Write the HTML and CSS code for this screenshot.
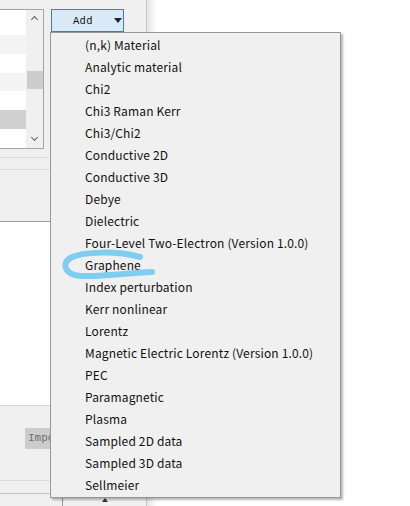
FILE: index.html
```html
<!DOCTYPE html>
<html>
<head>
<meta charset="utf-8">
<link rel="stylesheet" href="styles.css">
</head>
<body>
<div class="screen">
  <div class="panel">
    <div class="top-row">
      <div class="listbox">
        <div class="rows">
          <div class="row r-white r-tall"></div>
          <div class="row r-alt"></div>
          <div class="row r-white"></div>
          <div class="row r-alt"></div>
          <div class="row r-white"></div>
          <div class="row r-sel"></div>
          <div class="row r-white"></div>
        </div>
        <div class="scrollbar">
          <span class="chev up"></span>
          <span class="thumb"></span>
          <span class="chev down"></span>
        </div>
      </div>
      <div class="add-btn"><span class="add-label">Add</span><span class="caret"></span></div>
    </div>
    <div class="sep sep1"></div>
    <div class="sep sep2"></div>
    <div class="white-box"></div>
    <div class="imp-row"><span class="imp-btn">Impo</span></div>
    <div class="sep sep3"></div>
    <div class="sep sep4"></div>
    <div class="bottom-btn"><span class="tri"></span></div>
  </div>
  <div class="splitter"></div>

  <ul class="menu">
    <li>(n,k) Material</li>
    <li>Analytic material</li>
    <li>Chi2</li>
    <li>Chi3 Raman Kerr</li>
    <li>Chi3/Chi2</li>
    <li>Conductive 2D</li>
    <li>Conductive 3D</li>
    <li>Debye</li>
    <li>Dielectric</li>
    <li>Four-Level Two-Electron (Version 1.0.0)</li>
    <li>Graphene</li>
    <li>Index perturbation</li>
    <li>Kerr nonlinear</li>
    <li>Lorentz</li>
    <li>Magnetic Electric Lorentz (Version 1.0.0)</li>
    <li>PEC</li>
    <li>Paramagnetic</li>
    <li>Plasma</li>
    <li>Sampled 2D data</li>
    <li>Sampled 3D data</li>
    <li>Sellmeier</li>
  </ul>

  <svg class="scribble" width="410" height="506" viewBox="0 0 410 506">
    <path d="M140,257 C118,251 84,251 70,258 C62,264 64,274 80,276 C105,277 135,272 152,272" fill="none" stroke="#80cdf2" stroke-width="6" stroke-linecap="round" stroke-linejoin="round"/>
  </svg>
</div>
</body>
</html>
```

FILE: styles.css
```css
html, body {
  margin: 0;
  padding: 0;
  background: #ffffff;
}
.screen {
  position: relative;
  width: 410px;
  height: 506px;
  overflow: hidden;
  display: flex;
  background: #ffffff;
}
.panel {
  width: 146px;
  height: 506px;
  background: #f0f0f0;
  display: flex;
  flex-direction: column;
}
.splitter {
  width: 10px;
  height: 506px;
  border-left: 1px solid #c8c8c8;
  background: linear-gradient(to right, #e6e6e6, #ffffff);
}
.top-row {
  display: flex;
  align-items: flex-start;
  padding-top: 9px;
  gap: 7px;
}
.listbox {
  width: 43px;
  height: 138px;
  border: 1px solid #a5a5a5;
  border-left: none;
  display: flex;
  background: #ffffff;
}
.rows {
  width: 26px;
  display: flex;
  flex-direction: column;
}
.row { height: 19px; }
.r-tall { height: 26px; }
.r-white { background: #ffffff; }
.r-alt { background: #f4f4f4; }
.r-sel { background: #d0d0d0; height: 20px; }
.scrollbar {
  width: 17px;
  background: #f0f0f0;
  display: flex;
  flex-direction: column;
  align-items: center;
  position: relative;
}
.chev {
  width: 4px;
  height: 4px;
  border-left: 1.6px solid #606060;
  border-top: 1.6px solid #606060;
  margin-top: 7px;
  transform: rotate(45deg);
}
.chev.down {
  transform: rotate(225deg);
  margin-top: 46px;
}
.thumb {
  width: 16px;
  height: 18px;
  background: #cdcdcd;
  margin-top: 49px;
}
.add-btn {
  border: 1px solid #3b80be;
  background: #dbeaf9;
  display: flex;
  align-items: center;
  box-sizing: border-box;
  width: 73px;
  height: 23px;
}
.add-label {
  font-family: "Liberation Mono", monospace;
  font-size: 10.5px;
  color: #111;
  margin-left: 21px;
  letter-spacing: 0.3px;
}
.caret {
  width: 0;
  height: 0;
  border-left: 4px solid transparent;
  border-right: 4px solid transparent;
  border-top: 5px solid #222;
  margin-left: 21px;
}
.sep {
  height: 1px;
  background: #dcdcdc;
  width: 146px;
}
.sep1 { margin-top: 8px; }
.sep2 { margin-top: 11px; }
.white-box {
  margin-top: 51px;
  height: 187px;
  background: #ffffff;
  border-top: 1px solid #a0a0a0;
  border-bottom: 1px solid #d8d8d8;
}
.imp-row {
  margin-top: 22px;
  height: 21px;
  padding-left: 25px;
  display: flex;
}
.imp-btn {
  width: 30px;
  height: 21px;
  background: #cccccc;
  font-family: "Liberation Mono", monospace;
  font-size: 11px;
  color: #6e6e6e;
  line-height: 21px;
  padding-left: 3px;
  overflow: hidden;
  white-space: nowrap;
}
.sep3 { margin-top: 31px; background: #dadada; }
.sep4 { margin-top: 12px; background: #c4c4c4; }
.bottom-btn {
  margin-left: 62px;
  width: 84px;
  height: 10px;
  border-left: 1px solid #9a9a9a;
  border-top: 1px solid #9a9a9a;
  display: flex;
  justify-content: center;
  margin-top: 1px;
}
.tri {
  width: 0;
  height: 0;
  border-left: 3px solid transparent;
  border-right: 3px solid transparent;
  border-bottom: 4px solid #333;
  margin-top: 2px;
}
.menu {
  position: absolute;
  left: 50px;
  top: 32px;
  width: 291px;
  height: 466px;
  margin: 0;
  padding: 1px 0 3px;
  box-sizing: border-box;
  list-style: none;
  background: #f0f0f0;
  border: 1px solid #979797;
  box-shadow: 2px 2px 2px rgba(0, 0, 0, 0.28);
  font-family: "Noto Sans CJK SC", "Noto Sans", sans-serif;
  font-size: 12px;
  letter-spacing: 0.15px;
  color: #111111;
}
.menu li {
  height: 22px;
  line-height: 22px;
  padding-left: 34px;
  white-space: nowrap;
}
.scribble {
  position: absolute;
  left: 0;
  top: 0;
  pointer-events: none;
}
```
